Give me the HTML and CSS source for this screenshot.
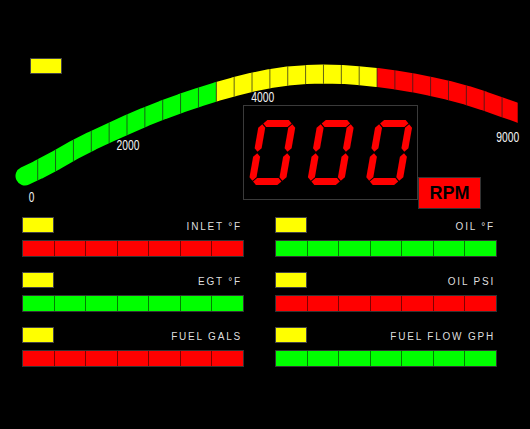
FILE: index.html
```html
<!DOCTYPE html>
<html>
<head>
<meta charset="utf-8">
<link rel="stylesheet" href="styles.css">
</head>
<body>
<section class="gauge">
  <svg class="arc" width="530" height="217" viewBox="0 0 530 217">
    <defs>
      <path id="band" d="M25 176 L37.7 170 L55.7 160.5 L74 150 L91.7 141 L110 132.5 L127.7 124.5 L145 117 L162.7 110 L181 103.3 L199 97.2 L216.5 91.7 L234 86.8 L252 82.3 L270 78.6 L288 76 L306 74.6 L323 74 L342 74.4 L358 75.6 L377 77.5 L395 79.9 L413 82.8 L430 86.2 L448 90.3 L467 95.4 L484 100.9 L502 107.2 L518 112.8 L535 119"/>
      <clipPath id="clip-green"><rect x="0" y="0" width="216.3" height="217"/></clipPath>
      <clipPath id="clip-yellow"><rect x="216.3" y="0" width="160.7" height="217"/></clipPath>
      <clipPath id="clip-red"><rect x="377" y="0" width="140.7" height="217"/></clipPath>
      <clipPath id="clip-ticks"><rect x="30" y="0" width="487.7" height="217"/></clipPath>
      <pattern id="ticks" patternUnits="userSpaceOnUse" x="37.2" y="0" width="17.86" height="217">
        <rect x="0" y="0" width="1" height="217" class="tick"/>
      </pattern>
    </defs>
    <g class="band">
      <use href="#band" class="seg-green" clip-path="url(#clip-green)"/>
      <use href="#band" class="seg-yellow" clip-path="url(#clip-yellow)"/>
      <use href="#band" class="seg-red" clip-path="url(#clip-red)"/>
      <use href="#band" class="seg-ticks" clip-path="url(#clip-ticks)"/>
    </g>
    <g class="scale">
      <text x="28.8" y="202" textLength="5.6" lengthAdjust="spacingAndGlyphs">0</text>
      <text x="116.5" y="150" textLength="23" lengthAdjust="spacingAndGlyphs">2000</text>
      <text x="251.2" y="102" textLength="23" lengthAdjust="spacingAndGlyphs">4000</text>
      <text x="496.2" y="142" textLength="23" lengthAdjust="spacingAndGlyphs">9000</text>
    </g>
  </svg>
  <div class="lamp"></div>
  <div class="readout">
    <div class="display">
      <svg width="173" height="93" viewBox="0 0 173 93">
        <defs>
          <g id="zero">
            <polygon points="4.3,3.5 7.8,0 29.2,0 32.7,3.5 29.2,7 7.8,7"/>
            <polygon points="4.3,61.5 7.8,58 29.2,58 32.7,61.5 29.2,65 7.8,65"/>
            <polygon points="3.5,4.3 7,7.8 7,28.2 3.5,31.7 0,28.2 0,7.8"/>
            <polygon points="3.5,33.3 7,36.8 7,57.2 3.5,60.7 0,57.2 0,36.8"/>
            <polygon points="33.5,4.3 37,7.8 37,28.2 33.5,31.7 30,28.2 30,7.8"/>
            <polygon points="33.5,33.3 37,36.8 37,57.2 33.5,60.7 30,57.2 30,36.8"/>
          </g>
        </defs>
        <g class="digits">
          <use href="#zero" transform="translate(15.6 14) skewX(-10)"/>
          <use href="#zero" transform="translate(74 14) skewX(-10)"/>
          <use href="#zero" transform="translate(132.4 14) skewX(-10)"/>
        </g>
      </svg>
    </div>
    <div class="unit">RPM</div>
  </div>
</section>

<section class="panels">
  <div class="meter">
    <div class="meter-head"><div class="lamp"></div><span class="meter-label">INLET °F</span></div>
    <div class="bar red"><i class="cell"></i><i class="cell"></i><i class="cell"></i><i class="cell"></i><i class="cell"></i><i class="cell"></i><i class="cell"></i></div>
  </div>
  <div class="meter">
    <div class="meter-head"><div class="lamp"></div><span class="meter-label">OIL °F</span></div>
    <div class="bar green"><i class="cell"></i><i class="cell"></i><i class="cell"></i><i class="cell"></i><i class="cell"></i><i class="cell"></i><i class="cell"></i></div>
  </div>
  <div class="meter">
    <div class="meter-head"><div class="lamp"></div><span class="meter-label">EGT °F</span></div>
    <div class="bar green"><i class="cell"></i><i class="cell"></i><i class="cell"></i><i class="cell"></i><i class="cell"></i><i class="cell"></i><i class="cell"></i></div>
  </div>
  <div class="meter">
    <div class="meter-head"><div class="lamp"></div><span class="meter-label">OIL PSI</span></div>
    <div class="bar red"><i class="cell"></i><i class="cell"></i><i class="cell"></i><i class="cell"></i><i class="cell"></i><i class="cell"></i><i class="cell"></i></div>
  </div>
  <div class="meter">
    <div class="meter-head"><div class="lamp"></div><span class="meter-label">FUEL GALS</span></div>
    <div class="bar red"><i class="cell"></i><i class="cell"></i><i class="cell"></i><i class="cell"></i><i class="cell"></i><i class="cell"></i><i class="cell"></i></div>
  </div>
  <div class="meter">
    <div class="meter-head"><div class="lamp"></div><span class="meter-label">FUEL FLOW GPH</span></div>
    <div class="bar green"><i class="cell"></i><i class="cell"></i><i class="cell"></i><i class="cell"></i><i class="cell"></i><i class="cell"></i><i class="cell"></i></div>
  </div>
</section>
</body>
</html>
```

FILE: styles.css
```css
html, body {
  margin: 0;
  padding: 0;
  background: #000;
}

body {
  width: 530px;
  height: 429px;
  overflow: hidden;
  font-family: "Liberation Sans", Arial, sans-serif;
}

/* ---------- RPM gauge ---------- */
.gauge {
  position: relative;
  height: 217px;
  box-sizing: border-box;
  padding: 58px 0 0 30px;
}

.arc {
  position: absolute;
  left: 0;
  top: 0;
}

.band use {
  fill: none;
  stroke-width: 19;
  stroke-linejoin: round;
  stroke-linecap: round;
}

.seg-green { stroke: #00ff00; }
.seg-yellow { stroke: #ffff00; }
.seg-red { stroke: #ff0000; }
.seg-ticks { stroke: url(#ticks); }

.tick {
  fill: #1e1e1e;
  fill-opacity: 0.7;
}

.scale text {
  font-family: "Liberation Sans", Arial, sans-serif;
  font-size: 14px;
  fill: #f2f2f2;
}

.lamp {
  width: 32px;
  height: 16px;
  box-sizing: border-box;
  background: #ffff00;
  border: 1px solid #444;
}

.readout {
  display: flex;
  margin: 31px 0 0 213px;
}

.display {
  width: 175px;
  height: 95px;
  box-sizing: border-box;
  border: 1px solid #3a3a3a;
}

.display svg {
  display: block;
}

.digits {
  fill: #ff0000;
}

.unit {
  width: 63px;
  height: 32px;
  box-sizing: border-box;
  margin-top: 72px;
  background: #ff0000;
  border: 1px solid #333;
  display: flex;
  align-items: center;
  justify-content: center;
  color: #000;
  font-weight: bold;
  font-size: 18px;
}

/* ---------- small meters ---------- */
.panels {
  display: grid;
  grid-template-columns: 222px 222px;
  column-gap: 31px;
  row-gap: 15px;
  padding-left: 22px;
}

.meter-head {
  display: flex;
  justify-content: space-between;
  height: 16px;
}

.meter-label {
  align-self: flex-end;
  font-size: 10px;
  line-height: 12px;
  letter-spacing: 1.8px;
  color: #dedede;
  padding-right: 2px;
}

.bar {
  display: flex;
  height: 17px;
  box-sizing: border-box;
  margin-top: 7px;
  border: 1px solid #333;
}

.cell {
  flex: 1;
}

.cell + .cell {
  border-left: 1px solid rgba(0, 0, 0, 0.5);
}

.bar.red .cell { background: #ff0000; }
.bar.green .cell { background: #00ff00; }
```
